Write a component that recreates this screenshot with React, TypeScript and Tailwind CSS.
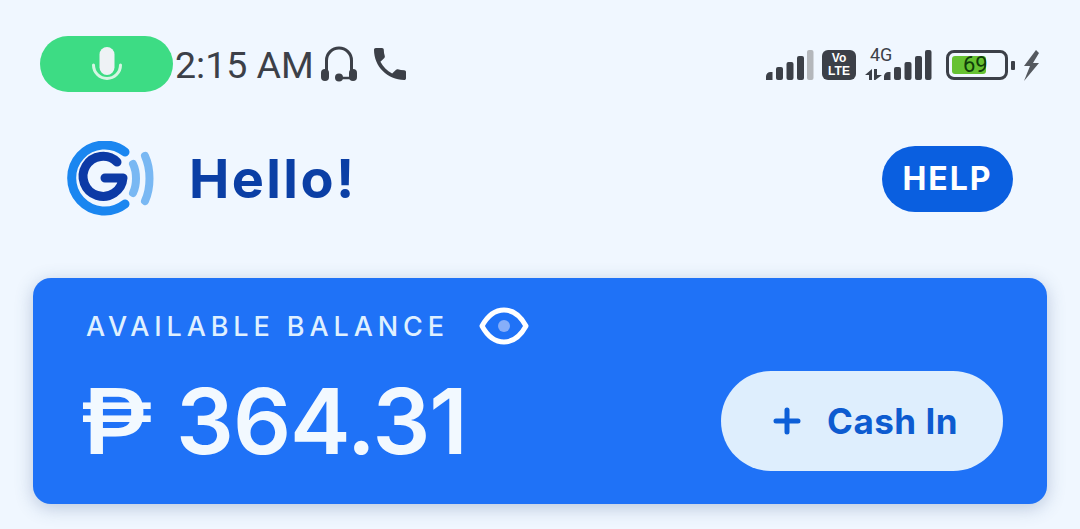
import React from 'react';

const Mic = () => (
  <svg width="32" height="36" viewBox="0 0 32 36" fill="none">
    <rect x="8.500" y="1" width="15" height="28" rx="7.500" fill="#eef2f5" />
    <path d="M2.500 19a13.500 13.500 0 0 0 27 0" stroke="#d5f5e3" strokeWidth="3" strokeLinecap="round" />
  </svg>
);

const Headset = () => (
  <svg width="36" height="36" viewBox="0 0 36 36" fill="none">
    <path d="M5.500 25 V14.500 a12.500 12.500 0 0 1 25 0 V25" stroke="#3c4048" strokeWidth="3" />
    <rect x="0" y="23" width="8" height="12" rx="4" fill="#3c4048" />
    <rect x="28" y="23" width="8" height="12" rx="4" fill="#3c4048" />
    <path d="M30 32 H18" stroke="#3c4048" strokeWidth="2.500" />
    <circle cx="18" cy="31.500" r="4" fill="#3c4048" />
  </svg>
);

const Phone = () => (
  <svg width="32" height="32" viewBox="3 3 18 18" fill="#3c4048">
    <path d="M6.620 10.790c1.440 2.830 3.760 5.140 6.590 6.590l2.200-2.200c.270-.270.670-.360 1.020-.240 1.120.370 2.330.570 3.570.570.550 0 1 .450 1 1V20c0 .550-.450 1-1 1-9.390 0-17-7.610-17-17 0-.550.450-1 1-1h3.500c.550 0 1 .450 1 1 0 1.250.200 2.450.570 3.570.110.350.030.740-.250 1.020l-2.200 2.200z" />
  </svg>
);

const Bars = ({ lastFaded }: { lastFaded?: boolean }) => (
  <svg width="48" height="30" viewBox="0 0 48 30" fill="#3c4048">
    <path d="M0 26.500 a4.500 4.500 0 0 1 4.500-4.500 h2 v8 H0z" />
    <rect x="10" y="17" width="7" height="13" rx="2" />
    <rect x="20.500" y="12" width="7" height="18" rx="2" />
    <rect x="31" y="6" width="7" height="24" rx="2" />
    <rect x="41" y="0" width="6.500" height="30" rx="2" fill={lastFaded ? '#b4b7bb' : '#3c4048'} />
  </svg>
);

const Logo = () => (
  <svg width="90" height="76" viewBox="0 0 90 76" fill="none">
    <path d="M59 11 A33 33 0 1 0 59 63" stroke="#1a86f0" strokeWidth="9" strokeLinecap="round" />
    <path d="M51 21 A20 20 0 1 0 57 37 H39" stroke="#0c3aa6" strokeWidth="9" strokeLinecap="round" strokeLinejoin="round" />
    <path d="M67 23 C71 31 71 44 67 52" stroke="#79b8f3" strokeWidth="8" strokeLinecap="round" />
    <path d="M79 15 C85 28 85 47 79 60" stroke="#79b8f3" strokeWidth="8" strokeLinecap="round" />
  </svg>
);

const BalanceEye = () => (
  <svg width="50" height="38" viewBox="0 0 50 38" fill="none">
    <path d="M3 19 C9 8 17 3 25 3 C33 3 41 8 47 19 C41 30 33 35 25 35 C17 35 9 30 3 19 Z" stroke="#ffffff" strokeWidth="5" strokeLinejoin="round" />
    <circle cx="25" cy="19" r="6" fill="#86aef9" />
  </svg>
);

export default function App() {
  return (
    <div className="w-[1080px] h-[529px] overflow-hidden bg-[#f0f7ff] font-['Inter',sans-serif]">
      {/* status bar */}
      <div className="flex items-center justify-between pt-[36px] pl-[40px] pr-[40px] h-[92px]">
        <div className="flex items-center">
          <div className="flex items-center justify-center w-[133px] h-[56px] rounded-full bg-[#3ddc84]">
            <Mic />
          </div>
          <span className="ml-[2px] mt-[4px] text-[37.500px] leading-none text-[#3c4048] font-['Roboto',sans-serif]">2:15 AM</span>
          <span className="ml-[7px] -mt-[1px]"><Headset /></span>
          <span className="ml-[17px]"><Phone /></span>
        </div>
        <div className="flex items-center mt-[2px]">
          <Bars lastFaded />
          <div className="ml-[8px] flex flex-col items-center justify-center w-[34px] h-[30px] rounded-[6px] bg-[#3c4048] text-white text-[12px] leading-[13px] font-bold font-['Liberation_Sans',sans-serif]">
            <span>Vo</span>
            <span>LTE</span>
          </div>
          <div className="ml-[9px] relative flex items-end h-[30px]">
            <span className="absolute left-[5px] -top-[4px] text-[18px] leading-none text-[#3c4048] font-['Roboto',sans-serif]">4G</span>
            <svg className="mr-[2px]" width="17" height="30" viewBox="0 0 17 30" fill="#3c4048">
              <path d="M0 25 7 19 V30 H4 V25Z" />
              <path d="M9 19 H12 V25 H17 L9 31Z" />
            </svg>
            <Bars />
          </div>
          <div className="ml-[14px] relative w-[62px] h-[30px] rounded-[8px] border-[3px] border-[#3c4048] p-[3px]">
            <div className="w-[34px] h-full rounded-[3px] bg-[#66c232]" />
            <span className="absolute left-[14px] top-0 text-[22px] leading-[24px] text-[#0f3d0a] font-['Roboto',sans-serif]">69</span>
          </div>
          <div className="ml-[3px] w-[4px] h-[9px] rounded-[1px] bg-[#3c4048]" />
          <svg className="ml-[8px]" width="17" height="31" viewBox="0 0 17 31" fill="#55595f">
            <path d="M13 0 1 16 H7 L1 31 16 13 H10 L16 3Z" />
          </svg>
        </div>
      </div>

      {/* header */}
      <div className="flex items-center justify-between pl-[66px] pr-[67px] mt-[49px] h-[76px]">
        <div className="flex items-center">
          <Logo />
          <span className="ml-[33px] text-[54px] leading-none font-bold tracking-[2.400px] text-[#0b3fa5]">Hello!</span>
        </div>
        <div className="flex items-center justify-center w-[131px] h-[66px] rounded-full bg-[#0a5fe0] text-white text-[32px] font-bold tracking-[2px]">
          HELP
        </div>
      </div>

      {/* balance card */}
      <div className="mx-[33px] mt-[61px] h-[226px] rounded-[18px] bg-[#1f72f7] shadow-[0_4px_18px_rgba(60,90,140,0.3)] pl-[50px] pr-[44px] flex flex-col">
        <div className="flex items-center mt-[23px] h-[50px]">
          <span className="ml-[3px] text-[27px] leading-none tracking-[4.900px] font-medium text-[#dff0ff]">AVAILABLE BALANCE</span>
          <span className="ml-[30px]"><BalanceEye /></span>
        </div>
        <div className="flex items-center justify-between mt-[20px]">
          <div className="flex items-center text-[91px] leading-none font-semibold tracking-[-1px] text-[#f2f9ff] -ml-[4px]">
            <span className="w-[97px] scale-x-[1.2] origin-left font-medium">₱</span>
            <span>364.31</span>
          </div>
          <div className="flex items-center justify-center w-[282px] h-[100px] pl-[7px] rounded-full bg-[#deeefd] text-[#0d5bd0]">
            <svg width="28" height="28" viewBox="0 0 28 28" fill="none" stroke="#0d5fd8" strokeWidth="5" strokeLinecap="round">
              <path d="M14 3 V25 M3 14 H25" />
            </svg>
            <span className="ml-[26px] text-[35px] leading-none font-bold tracking-[0.5px]">Cash In</span>
          </div>
        </div>
      </div>
    </div>
  );
}
